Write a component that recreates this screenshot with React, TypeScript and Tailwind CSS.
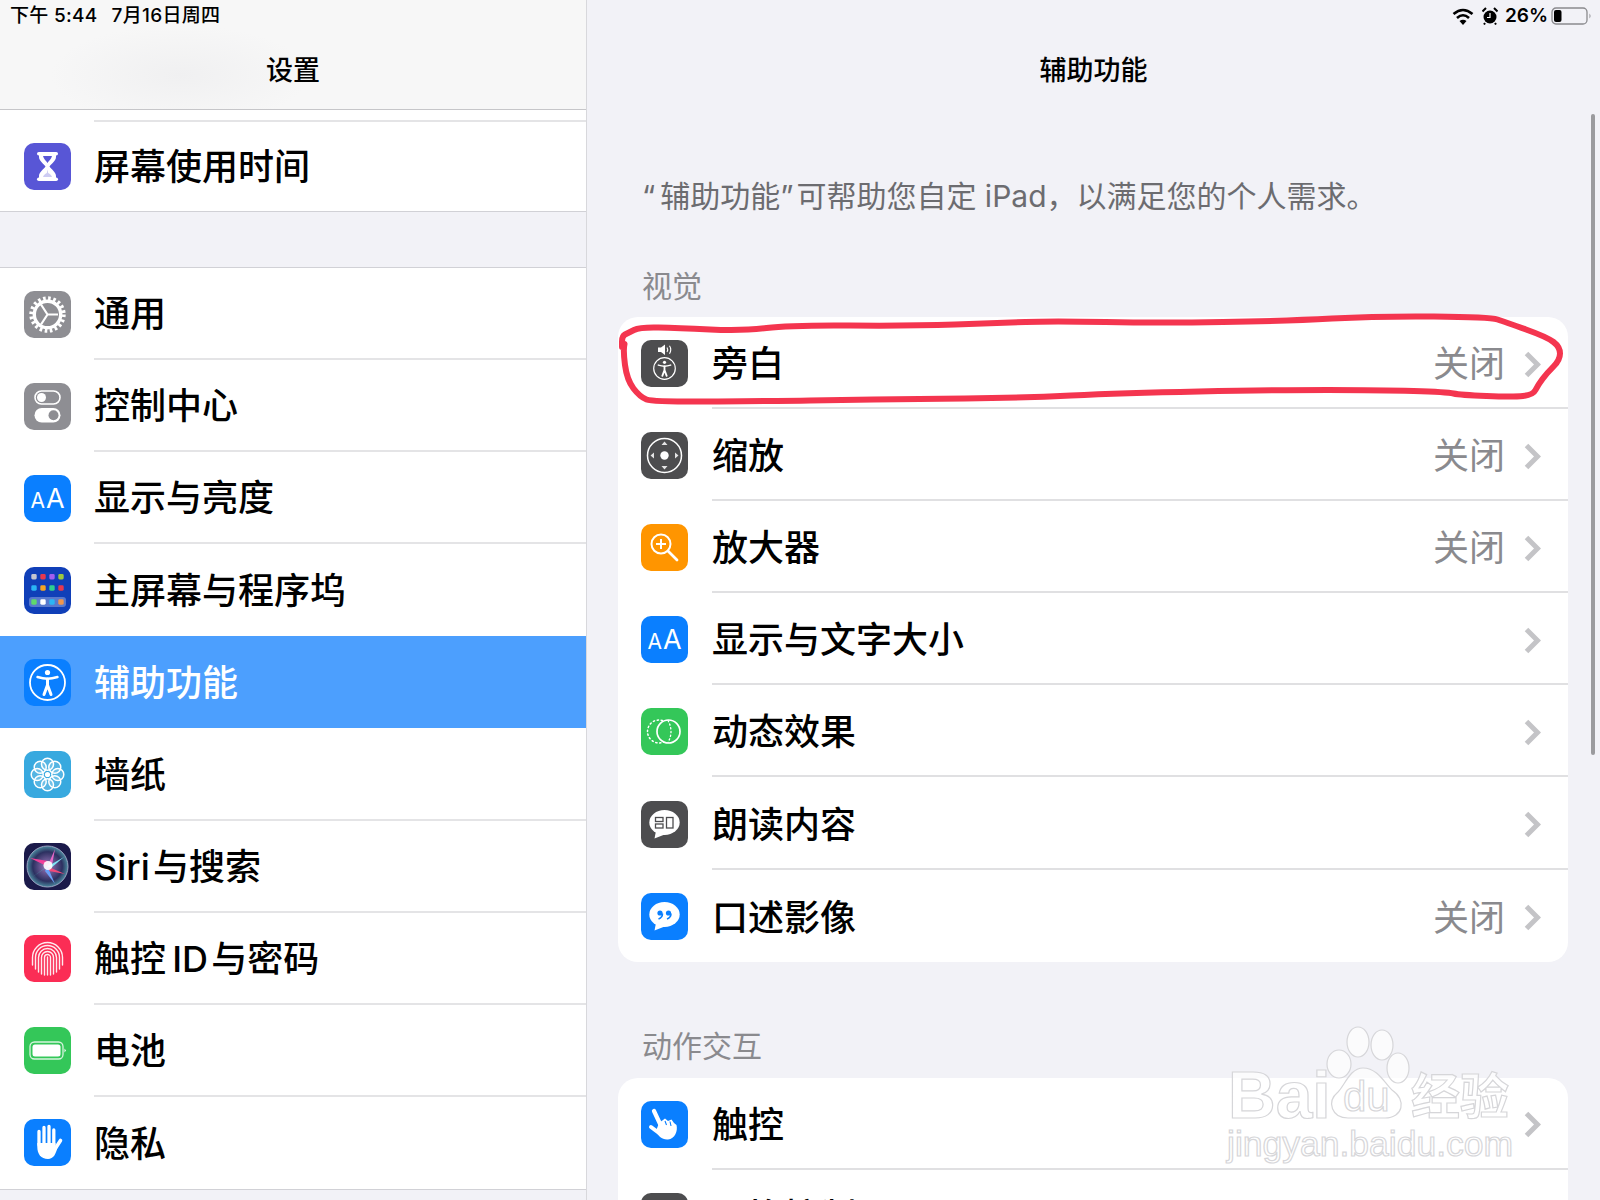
import type { ReactNode } from "react";

const Svg = ({ children }: { children: ReactNode }) => (
  <svg viewBox="0 0 47 47" className="w-[47px] h-[47px]" fill="none">
    {children}
  </svg>
);

const IconBox = ({ bg, children }: { bg: string; children?: ReactNode }) => (
  <div className={`w-[47px] h-[47px] rounded-[10px] shrink-0 flex items-center justify-center overflow-hidden ${bg}`}>
    {children}
  </div>
);

const Person = ({ cx, cy, r, sw }: { cx: number; cy: number; r: number; sw: number }) => {
  const s = r / 17.5;
  return (
    <g transform={`translate(${cx} ${cy}) scale(${s})`} stroke="white" fill="none">
      <circle r="17.5" strokeWidth={sw / s} />
      <circle cy="-10" r="2.6" fill="white" stroke="none" />
      <path d="M-10-5.5C-5-4-2-3.8 0-3.8S5-4 10-5.5" strokeWidth="2.4" strokeLinecap="round" />
      <path d="M0-3.5V2.5M0 2.5L-3.5 12M0 2.5L3.5 12" strokeWidth="3" strokeLinecap="round" />
    </g>
  );
};

const ScreenTimeIcon = () => (
  <IconBox bg="bg-[#5856d6]">
    <Svg>
      <rect x="13" y="9" width="21" height="3.500" rx="1.750" fill="white" />
      <rect x="13" y="34.500" width="21" height="3.500" rx="1.750" fill="white" />
      <path d="M15 11H32V14C32 18 27 21 25.500 23.500C27 26 32 29 32 33V36H15V33C15 29 20 26 21.500 23.500C20 21 15 18 15 14Z" fill="white" />
      <path d="M19 13H28C27.500 16 24.500 18 23.500 20C22.500 18 19.500 16 19 13Z" fill="#5856d6" />
      <path d="M23.500 26.500L22.800 30C21 31 19.500 32 19 34H28C27.500 32 26 31 24.200 30Z" fill="#5856d6" opacity="0.3" />
    </Svg>
  </IconBox>
);

const GearIcon = () => (
  <IconBox bg="bg-[#8e8e93]">
    <Svg>
      <circle cx="23.5" cy="23.5" r="16.2" stroke="white" strokeWidth="4" strokeDasharray="2.6 2.5" />
      <circle cx="23.5" cy="23.5" r="13.2" stroke="white" strokeWidth="3.4" />
      <path d="M23.5 23.5H34M23.5 23.5L17 13.5M23.5 23.5L17 33.5" stroke="white" strokeWidth="2.200" />
    </Svg>
  </IconBox>
);

const ToggleIcon = () => (
  <IconBox bg="bg-[#8e8e93]">
    <Svg>
      <rect x="11" y="8" width="25" height="13" rx="6.5" stroke="white" strokeWidth="1.6" />
      <circle cx="17.5" cy="14.5" r="4.5" fill="white" />
      <rect x="10.5" y="25" width="26" height="14.5" rx="7.25" fill="white" />
      <circle cx="29.5" cy="32.2" r="5" fill="#8e8e93" />
    </Svg>
  </IconBox>
);

const TextSizeIcon = () => (
  <IconBox bg="bg-[#0a7fff]">
    <span className="text-white leading-none flex items-baseline font-normal">
      <span className="text-[21px] mr-[1px]">A</span>
      <span className="text-[27px]">A</span>
    </span>
  </IconBox>
);

const HomeIcon = () => {
  const xs = [10, 19, 28, 37];
  const top = ["#c4c6d0", "#e8384f", "#a25ef0", "#9cc93f"];
  const mid = ["#2ab5f5", "#f5a623", "#2ecf8f", "#e8384f"];
  const dock = ["#5fd96a", "#ffffff", "#2ab5f5", "#f0954a"];
  return (
    <IconBox bg="bg-[#103fb8]">
      <Svg>
        {xs.map((x, i) => (
          <rect key={`t${i}`} x={x - 2.7} y="7" width="5.4" height="5.4" rx="1.4" fill={top[i]} />
        ))}
        {xs.map((x, i) => (
          <rect key={`m${i}`} x={x - 2.7} y="18.3" width="5.4" height="5.4" rx="1.4" fill={mid[i]} />
        ))}
        <rect x="5" y="30" width="37" height="10" rx="3" fill="white" fillOpacity="0.3" />
        {xs.map((x, i) => (
          <rect key={`d${i}`} x={x - 2.7} y="32.3" width="5.4" height="5.4" rx="1.4" fill={dock[i]} />
        ))}
      </Svg>
    </IconBox>
  );
};

const AccessIcon = () => (
  <IconBox bg="bg-[#0a7fff]">
    <Svg>
      <Person cx={23.5} cy={23.5} r={17.5} sw={1.8} />
    </Svg>
  </IconBox>
);

const FlowerIcon = () => (
  <IconBox bg="bg-[#38a9df]">
    <Svg>
      {[0, 45, 90, 135, 180, 225, 270, 315].map((a) => (
        <circle key={a} cx="23.5" cy="13.2" r="6" stroke="white" strokeWidth="1.5" fill="white" fillOpacity="0.15" transform={`rotate(${a} 23.5 23.5)`} />
      ))}
      <circle cx="23.5" cy="23.5" r="2.6" fill="white" />
    </Svg>
  </IconBox>
);

const SiriIcon = () => (
  <IconBox bg="bg-[#1b1a4a]">
    <Svg>
      <defs>
        <radialGradient id="siriBg">
          <stop offset="0%" stopColor="#a07ac0" />
          <stop offset="72%" stopColor="#2c3060" />
          <stop offset="100%" stopColor="#4a8a9e" />
        </radialGradient>
      </defs>
      <circle cx="23.5" cy="23.5" r="20.500" fill="url(#siriBg)" stroke="#9aa0c0" strokeWidth="1" />
      <path d="M23.5 23.5L6 15L24 18Z" fill="#f0409a" />
      <path d="M23.5 23.5L31 6L28 22Z" fill="#e868c8" />
      <path d="M23.5 23.5L41 31L25 28Z" fill="#f04a7a" />
      <path d="M23.5 23.5L7 35L21 25Z" fill="#45e6d4" />
      <path d="M23.5 23.5L31 41L21 28Z" fill="#6aa0f8" />
      <path d="M23.5 23.5L40 14L27 25Z" fill="#7fe4f4" />
      <circle cx="24" cy="22.5" r="4.500" fill="white" fillOpacity="0.9" />
    </Svg>
  </IconBox>
);

const TouchIdIcon = () => (
  <IconBox bg="bg-[#fb2d55]">
    <Svg>
      <g stroke="white" strokeOpacity="0.9" strokeWidth="1.4" strokeLinecap="round">
        <path d="M8.5 30V22.5A15 15 0 0 1 38.500 22.5V30" />
        <path d="M11.500 34V22.5A12 12 0 0 1 35.500 22.5V34" />
        <path d="M14.500 37V22.5A9 9 0 0 1 32.500 22.5V37" />
        <path d="M17.500 39V22.5A6 6 0 0 1 29.500 22.5V39" />
        <path d="M20.500 40V22.5A3 3 0 0 1 26.500 22.5V40" />
        <path d="M23.500 22V40" />
      </g>
    </Svg>
  </IconBox>
);

const BatteryIcon = () => (
  <IconBox bg="bg-[#34c759]">
    <Svg>
      <rect x="6" y="15" width="33" height="17" rx="4.500" stroke="white" strokeOpacity="0.8" strokeWidth="1.300" />
      <rect x="8.500" y="17.500" width="28" height="12" rx="2.500" fill="white" />
      <path d="M40.500 21.500L42 23.500L40.500 25.500Z" fill="white" />
    </Svg>
  </IconBox>
);

const HandIcon = () => (
  <IconBox bg="bg-[#0a7fff]">
    <Svg>
      <g stroke="white" strokeWidth="3.300" strokeLinecap="round">
        <path d="M15 12.500V26M20 8.500V24M25 7.500V24M29.800 11V26" />
        <path d="M31 30L36.500 21.500" strokeWidth="3.600" />
      </g>
      <path d="M13.300 24H31.500V30L33.500 28C32 35 29.500 40 24 40C17 40 13.300 35 13.300 28Z" fill="white" />
    </Svg>
  </IconBox>
);

const VoiceOverIcon = () => (
  <IconBox bg="bg-[#4d4d4f]">
    <Svg>
      <path d="M17 7.500H20L24 4.500V15L20 12H17Z" fill="white" />
      <path d="M26 7.500Q27.500 9.700 26 12M28.500 5.800Q31 9.700 28.500 13.700" stroke="white" strokeWidth="1.100" />
      <Person cx={23.5} cy={28.5} r={10.8} sw={1.2} />
    </Svg>
  </IconBox>
);

const ZoomIcon = () => (
  <IconBox bg="bg-[#4d4d4f]">
    <Svg>
      <circle cx="23.5" cy="23.5" r="17" stroke="white" strokeWidth="1.500" />
      <circle cx="23.5" cy="23.5" r="4.200" fill="white" />
      <path d="M23.500 9.500L26.500 13H20.500ZM23.500 37.500L26.500 34H20.500ZM9.500 23.500L13 20.500V26.500ZM37.500 23.500L34 20.500V26.500Z" fill="white" fillOpacity="0.85" />
    </Svg>
  </IconBox>
);

const MagnifierIcon = () => (
  <IconBox bg="bg-[#ff9500]">
    <Svg>
      <circle cx="20" cy="20" r="9.500" stroke="white" strokeWidth="2" />
      <path d="M20 15V25M15 20H25" stroke="white" strokeWidth="2" />
      <path d="M27 27L36 36" stroke="white" strokeWidth="2.800" strokeLinecap="round" />
    </Svg>
  </IconBox>
);

const MotionIcon = () => (
  <IconBox bg="bg-[#34c759]">
    <Svg>
      <circle cx="18" cy="23.500" r="11.500" stroke="white" strokeWidth="1.500" strokeDasharray="1.300 2.700" strokeLinecap="round" />
      <circle cx="27.500" cy="23.500" r="11.500" fill="#34c759" stroke="white" strokeWidth="1.700" />
      <path d="M27 12.500Q33 23.500 27 34.500" stroke="white" strokeWidth="1.300" strokeDasharray="1.300 2.500" strokeLinecap="round" />
    </Svg>
  </IconBox>
);

const SpeechIcon = () => (
  <IconBox bg="bg-[#4d4d4f]">
    <Svg>
      <ellipse cx="23.500" cy="21.500" rx="15.200" ry="12.500" fill="white" />
      <path d="M15 30L13.500 37.500L25 33Z" fill="white" />
      <rect x="14.500" y="16.500" width="7.500" height="4" stroke="#4d4d4f" strokeWidth="1.300" />
      <rect x="14.500" y="23" width="7.500" height="4" stroke="#4d4d4f" strokeWidth="1.300" />
      <rect x="25.500" y="16.500" width="6.500" height="10.500" stroke="#4d4d4f" strokeWidth="1.300" />
    </Svg>
  </IconBox>
);

const QuoteIcon = () => (
  <IconBox bg="bg-[#0a7fff]">
    <Svg>
      <ellipse cx="23.500" cy="21.500" rx="15.200" ry="12.500" fill="white" />
      <path d="M15 30L13.500 37.500L25 33Z" fill="white" />
      <circle cx="19" cy="20" r="2.600" fill="#0a7fff" />
      <circle cx="27.500" cy="20" r="2.600" fill="#0a7fff" />
      <path d="M21.500 20.500Q21.500 24.500 17.500 26M30 20.500Q30 24.500 26 26" stroke="#0a7fff" strokeWidth="1.600" />
    </Svg>
  </IconBox>
);

const TouchIcon = () => (
  <IconBox bg="bg-[#0a7fff]">
    <Svg>
      <path d="M13 10L20 25" stroke="white" strokeWidth="4.200" strokeLinecap="round" />
      <path d="M10 26L18 32" stroke="white" strokeWidth="4" strokeLinecap="round" />
      <path d="M18 22L24 17.500L27 20L30.500 18.500L33 22L35.500 24C37 30 34 38 27 38.500C21 39 17 35 15 30Z" fill="white" />
      <path d="M24 20L25.500 24M29 20.500L30 25" stroke="#0a7fff" strokeWidth="1.100" />
    </Svg>
  </IconBox>
);

const Chevron = () => (
  <svg viewBox="0 0 17 27" className="w-[17px] h-[27px] ml-[19px]" fill="none">
    <path d="M2.500 2.500L13.500 13.500L2.500 24.500" stroke="#c4c4c7" strokeWidth="5" />
  </svg>
);

const sideRows = [
  { icon: <GearIcon />, label: "通用" },
  { icon: <ToggleIcon />, label: "控制中心" },
  { icon: <TextSizeIcon />, label: "显示与亮度" },
  { icon: <HomeIcon />, label: "主屏幕与程序坞" },
  { icon: <AccessIcon />, label: "辅助功能", active: true },
  { icon: <FlowerIcon />, label: "墙纸" },
  { icon: <SiriIcon />, label: "Siri\u200a与搜索" },
  { icon: <TouchIdIcon />, label: "触控\u2009ID\u200a与密码" },
  { icon: <BatteryIcon />, label: "电池" },
  { icon: <HandIcon />, label: "隐私" },
];

const visionRows = [
  { icon: <VoiceOverIcon />, label: "旁白", value: "关闭" },
  { icon: <ZoomIcon />, label: "缩放", value: "关闭" },
  { icon: <MagnifierIcon />, label: "放大器", value: "关闭" },
  { icon: <TextSizeIcon />, label: "显示与文字大小" },
  { icon: <MotionIcon />, label: "动态效果" },
  { icon: <SpeechIcon />, label: "朗读内容" },
  { icon: <QuoteIcon />, label: "口述影像", value: "关闭" },
];

const SideRow = ({ icon, label, active, last }: { icon: ReactNode; label: string; active?: boolean; last?: boolean }) => (
  <div className={`flex h-[92.1px] items-center pl-[24px] text-[36px] font-medium ${active ? "bg-[#4c9ffe] text-white" : "bg-white text-black"}`}>
    <div className="mr-[23px]">{icon}</div>
    <div className={`flex-1 h-full flex items-center pt-[2px] ${active || last ? "" : "border-b-2 border-[#e4e4e6]"}`}>{label}</div>
  </div>
);

const DetailRow = ({ icon, label, value, last }: { icon: ReactNode; label: string; value?: string; last?: boolean }) => (
  <div className="flex h-[92.1px] items-center pl-[23px] text-[36px] font-medium text-black">
    <div className="mr-[24px] pt-[1px]">{icon}</div>
    <div className={`flex-1 h-full flex items-center pr-[27px] pt-[4px] ${last ? "" : "border-b-2 border-[#e0e0e2]"}`}>
      <span className="flex-1">{label}</span>
      {value && <span className="text-[#8a8a8e] font-normal">{value}</span>}
      <Chevron />
    </div>
  </div>
);

const WifiGlyph = () => (
  <svg viewBox="0 0 22 17" className="w-[22px] h-[17px]" fill="none">
    <path d="M1.500 6Q11-2 20.500 6M5 10Q11 4.500 17 10" stroke="black" strokeWidth="2.600" />
    <path d="M11 17L7.500 13Q11 10.500 14.500 13Z" fill="black" />
  </svg>
);

const AlarmGlyph = () => (
  <svg viewBox="0 0 16 18" className="w-[16px] h-[18px] ml-[8px] mr-[7px]">
    <circle cx="8" cy="10" r="6.500" fill="black" />
    <path d="M0.500 4.500L4 1M15.500 4.500L12 1M3 16L2 17.500M13 16L14 17.500" stroke="black" strokeWidth="2" />
    <path d="M8 6V10.500H5" stroke="white" strokeWidth="1.200" fill="none" />
  </svg>
);

const BatteryGlyph = () => (
  <svg viewBox="0 0 41 18" className="w-[41px] h-[18px] ml-[3px]" fill="none">
    <rect x="1" y="1" width="35" height="16" rx="4" stroke="#8a8a8e" strokeWidth="1.300" />
    <rect x="3" y="3" width="7.500" height="12" rx="2" fill="black" />
    <path d="M38.500 6.500Q40.500 9 38.500 11.500Z" fill="#8a8a8e" />
  </svg>
);

// 手绘红圈：用中点二次曲线把描的点连起来
const scribble: [number, number][] = [
  [622, 347], [622, 336], [628, 333], [640, 327], [677, 328], [743, 331], [790, 325], [910, 326], [1000, 323], [1051, 321],
  [1160, 323], [1286, 321], [1378, 316], [1490, 317], [1505, 322], [1547, 337], [1560, 347], [1560, 360], [1547, 373],
  [1538, 385], [1533, 395], [1513, 397], [1460, 395], [1447, 392], [1380, 390], [1276, 390], [1122, 393],
  [1020, 398], [910, 399], [837, 400], [783, 401], [653, 402], [640, 397], [627, 380], [623, 350], [626, 338],
];

const toPath = (pts: [number, number][]) =>
  pts.reduce((d, p, i) => {
    if (i === 0) return `M${p[0]} ${p[1]}`;
    const prev = pts[i - 1];
    return `${d} Q${prev[0]} ${prev[1]} ${(prev[0] + p[0]) / 2} ${(prev[1] + p[1]) / 2}`;
  }, "");

const Annotation = () => (
  <svg viewBox="0 0 1600 1200" className="absolute inset-0 w-[1600px] h-[1200px] pointer-events-none" fill="none">
    <path d={toPath(scribble)} stroke="#f4354f" strokeWidth="6" strokeLinecap="round" strokeLinejoin="round" />
    <g fill="white" fillOpacity="0.65" stroke="#d6d6d9" strokeWidth="1.200">
      <ellipse cx="1339" cy="1064" rx="12" ry="14" />
      <ellipse cx="1358" cy="1042" rx="11" ry="15" />
      <ellipse cx="1382" cy="1045" rx="11" ry="15" />
      <ellipse cx="1398" cy="1068" rx="11" ry="15" />
      <path d="M1363 1068C1350 1068 1345 1085 1338 1092C1326 1102 1332 1118 1348 1118H1385C1403 1118 1407 1100 1392 1090C1385 1084 1378 1068 1363 1068Z" />
      <text x="1228" y="1118" fontSize="66" fontWeight="700" fontFamily="Liberation Sans, sans-serif">Bai</text>
      <text x="1343" y="1111" fontSize="42" fontFamily="Liberation Sans, sans-serif">du</text>
      <text x="1411" y="1114" fontSize="49" fontWeight="700">经验</text>
      <text x="1227" y="1156" fontSize="35.500" fontFamily="Liberation Sans, sans-serif">jingyan.baidu.com</text>
    </g>
  </svg>
);

export default function App() {
  return (
    <div className="relative flex w-[1600px] h-[1200px] overflow-hidden bg-[#f2f2f7] [font-family:Inter,'Noto_Sans_CJK_SC',sans-serif]">
      <div className="w-[587px] shrink-0 h-full flex flex-col border-r border-[#d8d8dc]">
        <div className="h-[110px] shrink-0 flex flex-col border-b border-[#c6c6c9] bg-[radial-gradient(ellipse_130px_50px_at_180px_75px,#f0f0f1,#f7f7f7)]">
          <div className="h-[32px] flex items-center pl-[10px] text-[19px] font-medium text-black tracking-[0.3px]">
            <span>下午 5:44</span>
            <span className="ml-[14px]">7月16日周四</span>
          </div>
          <div className="flex-1 flex items-center justify-center text-[27px] font-medium text-black pt-[2px]">设置</div>
        </div>
        <div className="bg-white pt-[10px]">
          <div className="ml-[94px] border-t-2 border-[#e4e4e6]" />
          <div className="flex h-[90px] items-center pl-[24px] text-[36px] font-medium text-black border-b border-[#d1d1d6]">
            <div className="mr-[23px]">
              <ScreenTimeIcon />
            </div>
            屏幕使用时间
          </div>
        </div>
        <div className="h-[55px] shrink-0" />
        <div className="border-t border-[#d1d1d6]">
          {sideRows.map((r, i) => (
            <SideRow
              key={r.label}
              icon={r.icon}
              label={r.label}
              active={r.active}
              last={i === sideRows.length - 1 || sideRows[i + 1].active}
            />
          ))}
        </div>
        <div className="border-t border-[#d1d1d6]" />
      </div>

      <div className="relative flex-1 h-full flex flex-col">
        <div className="h-[109px] shrink-0 flex flex-col">
          <div className="h-[32px] flex items-center justify-end pr-[8px] text-[19px] font-semibold text-black">
            <WifiGlyph />
            <AlarmGlyph />
            <span>26%</span>
            <BatteryGlyph />
          </div>
          <div className="flex-1 flex items-center justify-center text-[27px] font-medium text-black pt-[2px]">辅助功能</div>
        </div>

        <div className="pl-[31px] pr-[32px]">
          <div className="mt-[66px] h-[42px] pl-[24px] flex items-center text-[30px] text-[#6c6c70]">
            <span className="whitespace-pre">
              “<span className="ml-[5px]">辅助功能</span>”<span className="ml-[3px]">可帮助您自定 iPad，以满足您的个人需求。</span>
            </span>
          </div>
          <div className="mt-[49px] mb-[11px] h-[40px] pl-[24px] flex items-center text-[30px] text-[#8a8a8e]">视觉</div>
          <div className="bg-white rounded-[20px] overflow-hidden">
            {visionRows.map((r, i) => (
              <DetailRow key={r.label} icon={r.icon} label={r.label} value={r.value} last={i === visionRows.length - 1} />
            ))}
          </div>
          <div className="mt-[65px] mb-[11px] h-[40px] pl-[24px] flex items-center text-[30px] text-[#8a8a8e]">动作交互</div>
          <div className="bg-white rounded-t-[20px] overflow-hidden">
            <DetailRow icon={<TouchIcon />} label="触控" />
            <DetailRow icon={<IconBox bg="bg-[#4d4d4f]" />} label="切换控制" />
          </div>
        </div>

        <div className="absolute top-[114px] right-[5px] w-[4px] h-[641px] rounded-full bg-[#9b9b9e]" />
      </div>

      <Annotation />
    </div>
  );
}
